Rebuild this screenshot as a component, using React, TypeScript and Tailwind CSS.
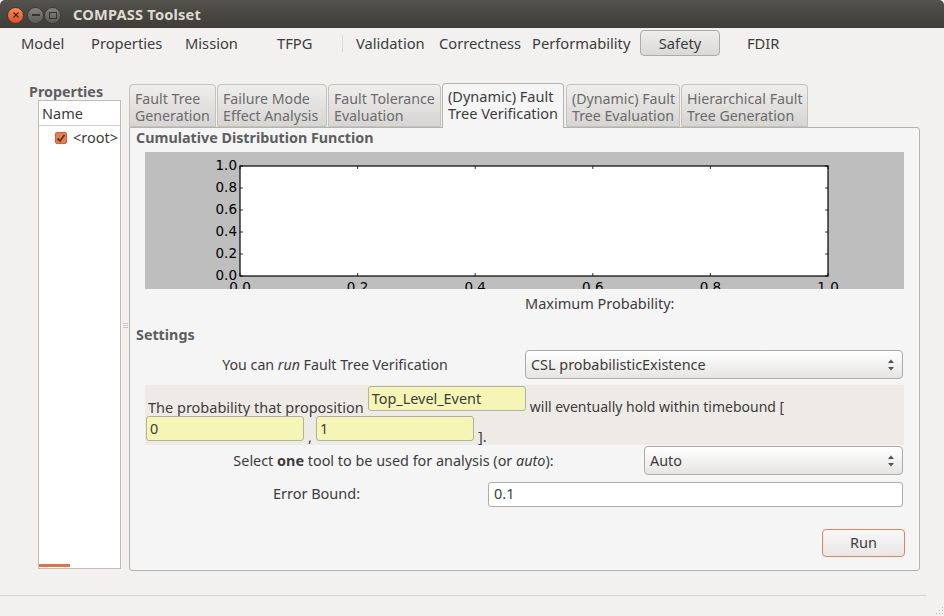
import React from "react";

const F = "font-['Noto_Sans',sans-serif]";

function Tab({ a, b, w, active }: { a: string; b: string; w: string; active?: boolean }) {
  return (
    <div
      className={
        active
          ? `${w} h-[45px] -mb-px z-10 rounded-t-[4px] border border-b-0 border-[#b5b3ae] bg-[#f5f5f5] pl-[5px] pt-[4px] text-[14.5px] leading-[17px] text-[#3c3c3c] whitespace-nowrap`
          : `${w} h-[43px] rounded-t-[4px] border border-[#c4c2bd] bg-gradient-to-b from-[#efeeed] to-[#d6d5d3] pl-[5px] pt-[5px] text-[14.2px] leading-[17px] text-[#6b6b6b] whitespace-nowrap`
      }
    >
      <div>{a}</div>
      <div>{b}</div>
    </div>
  );
}

function Spinner() {
  return (
    <svg width="8" height="14" viewBox="0 0 8 14" className="shrink-0">
      <path d="M4 1.5 L7 5 H1 Z" fill="#55534e" />
      <path d="M4 12.5 L7 9 H1 Z" fill="#55534e" />
    </svg>
  );
}

function Combo({ text, w }: { text: string; w: string }) {
  return (
    <div className={`${w} h-[29px] rounded-[4px] border border-[#aeaca7] bg-gradient-to-b from-[#ffffff] to-[#e6e5e3] pl-[5px] pr-[7px] flex items-center justify-between text-[14.4px] text-[#3c3c3c]`}>
      <span>{text}</span>
      <Spinner />
    </div>
  );
}

function YellowInput({ text, w }: { text: string; w: string }) {
  return (
    <div className={`${w} h-[25px] rounded-[3px] border border-[#b3b19f] bg-[#f5f5b5] pl-[3px] flex items-center text-[14.4px] text-[#3c3c3c]`}>
      {text}
    </div>
  );
}

function Chart() {
  const xs = [0, 0.2, 0.4, 0.6, 0.8, 1];
  const left = 95;
  const top = 14;
  const W = 588;
  const H = 110;
  return (
    <div className="h-[137px] bg-[#bebebe] overflow-hidden">
      <svg width="759" height="137" viewBox="0 0 759 137" className="block">
        <rect x={left} y={top} width={W} height={H} fill="#fff" stroke="#000" strokeWidth="1.2" />
        {xs.map((v) => {
          const x = left + W * v;
          const y = top + H * (1 - v);
          return (
            <g key={v}>
              <path d={`M${x} ${top} v3 M${x} ${top + H} v-3 M${left} ${y} h3 M${left + W} ${y} h-3`} stroke="#000" strokeWidth="0.8" />
              <text x={left - 3} y={y + 3.5} textAnchor="end" fontFamily="DejaVu Sans" fontSize="13.5" fill="#000">
                {v.toFixed(1)}
              </text>
              <text x={x} y={top + H + 15.5} textAnchor="middle" fontFamily="DejaVu Sans" fontSize="13.5" fill="#000">
                {v.toFixed(1)}
              </text>
            </g>
          );
        })}
      </svg>
    </div>
  );
}

export default function App() {
  return (
    <div className={`${F} w-[944px] h-[616px] overflow-hidden bg-[#f2f1f0] flex flex-col text-[14.5px] text-[#3c3c3c]`}>
      {/* Title bar */}
      <div className="h-[28px] pt-[2px] shrink-0 rounded-t-[5px] bg-gradient-to-b from-[#54524c] to-[#3e3d38] flex items-center pl-[7px]">
        <div className="w-[17px] h-[17px] rounded-full bg-gradient-to-b from-[#f98a58] to-[#e04e20] border border-[#3a3935] flex items-center justify-center">
          <svg width="8" height="8" viewBox="0 0 8 8"><path d="M1.5 1.5 L6.5 6.5 M6.5 1.5 L1.5 6.5" stroke="#4a2010" strokeWidth="1.3" /></svg>
        </div>
        <div className="ml-[3px] w-[17px] h-[17px] rounded-full bg-gradient-to-b from-[#85837d] to-[#5c5a54] border border-[#3a3935] flex items-center justify-center">
          <div className="w-[8px] h-[1.5px] bg-[#35342f]" />
        </div>
        <div className="w-[17px] h-[17px] rounded-full bg-gradient-to-b from-[#85837d] to-[#5c5a54] border border-[#3a3935] flex items-center justify-center">
          <div className="w-[8px] h-[7px] border border-[#35342f]" />
        </div>
        <div className="ml-[12px] text-[14.6px] font-bold text-[#dfdbd2] tracking-[0.2px]">COMPASS Toolset</div>
      </div>

      {/* Toolbar */}
      <div className="h-[30px] shrink-0 flex items-center text-[14.7px] text-[#3c3c3c] whitespace-nowrap">
        <div className="ml-[21px] w-[70px]">Model</div>
        <div className="w-[94px]">Properties</div>
        <div className="w-[92px]">Mission</div>
        <div className="w-[65px]">TFPG</div>
        <div className="w-px h-[17px] bg-[#dcdbd9]" />
        <div className="ml-[13px] w-[83px]">Validation</div>
        <div className="w-[93px]">Correctness</div>
        <div className="w-[108px]">Performability</div>
        <div className="w-[80px] h-[26px] rounded-[4px] border border-[#aeaca7] bg-gradient-to-b from-[#eeedec] to-[#d9d8d6] flex items-center justify-center">Safety</div>
        <div className="ml-[27px]">FDIR</div>
      </div>

      {/* Body */}
      <div className="flex-1 flex min-h-0 pt-[25px]">
        {/* Left column */}
        <div className="w-[121px] shrink-0 h-[487px] flex flex-col">
          <div className="pl-[29px] h-[17px] leading-[18px] font-bold text-[#5e5e5e] text-[14.3px]">Properties</div>
          <div className="ml-[38px] w-[83px] h-[469px] border border-[#bfbdb8] bg-white flex flex-col">
            <div className="h-[25px] pt-[2px] shrink-0 border-b border-[#cfcdc9] pl-[3px] flex items-center">Name</div>
            <div className="h-[24px] shrink-0 pl-[16px] flex items-center gap-[6px] whitespace-nowrap overflow-hidden">
              <div className="w-[12px] h-[12px] rounded-[2px] bg-[#ec7a4a] border border-[#c9663c] flex items-center justify-center shrink-0">
                <svg width="10" height="10" viewBox="0 0 10 10"><path d="M1.5 5.5 L4 8 L8.5 2" fill="none" stroke="#4a3a33" strokeWidth="1.8" /></svg>
              </div>
              <span>&lt;root&gt;</span>
            </div>
            <div className="flex-1" />
            <div className="w-[31px] h-[3px] mb-px bg-[#e9713f]" />
          </div>
        </div>

        {/* Splitter */}
        <div className="w-[8px] shrink-0 h-[487px] flex flex-col items-center pt-[240px] gap-[1px]">
          <div className="w-[5px] h-px bg-[#c9c7c3]" />
          <div className="w-[5px] h-px bg-[#c9c7c3]" />
          <div className="w-[5px] h-px bg-[#c9c7c3]" />
        </div>

        {/* Notebook */}
        <div className="w-[791px] shrink-0 flex flex-col">
          <div className="flex items-end gap-px h-[45px] -mt-[1px]">
            <Tab a="Fault Tree" b="Generation" w="w-[87px]" />
            <Tab a="Failure Mode" b="Effect Analysis" w="w-[110px]" />
            <Tab a="Fault Tolerance" b="Evaluation" w="w-[113px]" />
            <Tab a="(Dynamic) Fault" b="Tree Verification" w="w-[122px]" active />
            <Tab a="(Dynamic) Fault" b="Tree Evaluation" w="w-[114px] ml-px" />
            <Tab a="Hierarchical Fault" b="Tree Generation" w="w-[127px]" />
          </div>
          <div className="h-[444px] rounded-b-[3px] rounded-tr-[3px] border border-[#b5b3ae] bg-[#f5f5f5] pl-[6px] pr-[15px]">
            <div className="h-[24px] pb-[4px] flex items-center font-bold text-[#5e5e5e] text-[14.3px]">Cumulative Distribution Function</div>
            <div className="ml-[9px]">
              <Chart />
              <div className="h-[30px] flex items-center pl-[380px]">Maximum Probability:</div>
              <div className="h-[30px] pt-[2px] -ml-[9px] flex items-center font-bold text-[#5e5e5e] text-[14.3px]">Settings</div>
              <div className="h-[31px] flex items-center">
                <div className="w-[380px] text-center whitespace-nowrap text-[14.2px]">
                  You can <i>run</i> Fault Tree Verification
                </div>
                <Combo text="CSL probabilisticExistence" w="w-[378px]" />
              </div>
              <div className="mt-[5px] h-[60px] bg-[#eeebe7] pl-px flex flex-col">
                <div className="h-[31px] flex items-end whitespace-nowrap">
                  <span className="ml-[2px] mr-[4px] leading-[21px] -mb-[2px]">The probability that proposition</span>
                  <div className="mb-[5px]"><YellowInput text="Top_Level_Event" w="w-[158px]" /></div>
                  <span className="ml-[4px] leading-[21px] -mb-[1px] text-[14px]">will eventually hold within timebound [</span>
                </div>
                <div className="h-[29px] flex items-end whitespace-nowrap">
                  <div className="mb-[4px]"><YellowInput text="0" w="w-[158px]" /></div>
                  <span className="mx-[4px] leading-[17px]">,</span>
                  <div className="mb-[4px]"><YellowInput text="1" w="w-[158px]" /></div>
                  <span className="ml-[4px] leading-[17px]">].</span>
                </div>
              </div>
              <div className="h-[31px] flex items-center">
                <div className="w-[497px] text-center whitespace-nowrap text-[14.4px]">
                  Select <b>one</b> tool to be used for analysis (or <i>auto</i>):
                </div>
                <div className="w-[2px] shrink-0" />
                <Combo text="Auto" w="w-[259px]" />
              </div>
              <div className="mt-[5px] h-[26px] flex items-center">
                <div className="w-[343px] text-center whitespace-nowrap">Error Bound:</div>
                <div className="w-[415px] h-[25px] rounded-[3px] border border-[#aeaca7] bg-white pl-[5px] flex items-center">0.1</div>
              </div>
              <div className="mt-[22px] flex justify-end -mr-[1px]">
                <div className="w-[83px] h-[28px] rounded-[4px] border-[1.5px] border-[#ec8258] bg-gradient-to-b from-[#f8f8f8] to-[#e8e7e5] flex items-center justify-center">Run</div>
              </div>
            </div>
          </div>
        </div>
      </div>

      {/* Status bar */}
      <div className="h-[21px] shrink-0 relative">
        <div className="w-[926px] h-px bg-[#d6d5d2]" />
        <svg width="10" height="10" viewBox="0 0 10 10" className="absolute right-0 bottom-0">
          <g fill="#b9b7b3">
            <rect x="8" y="1" width="1" height="1" /><rect x="5" y="4" width="1" height="1" /><rect x="8" y="4" width="1" height="1" />
            <rect x="2" y="7" width="1" height="1" /><rect x="5" y="7" width="1" height="1" /><rect x="8" y="7" width="1" height="1" />
          </g>
        </svg>
      </div>
    </div>
  );
}
